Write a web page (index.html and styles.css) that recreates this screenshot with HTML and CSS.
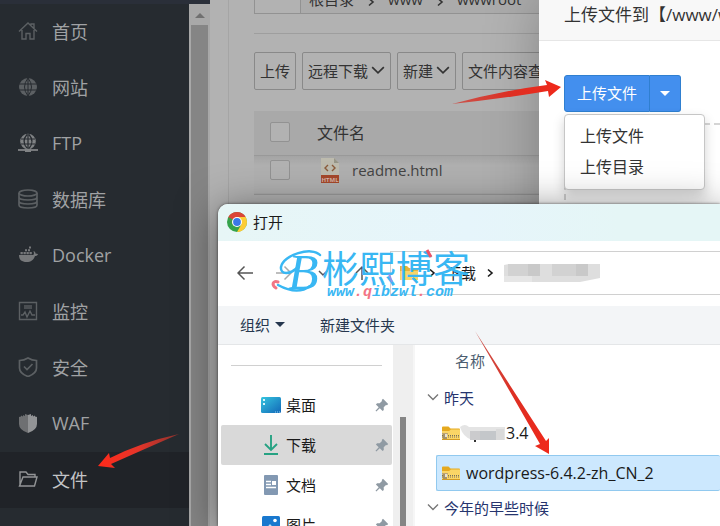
FILE: index.html
```
<!DOCTYPE html>
<html lang="zh-CN">
<head>
    <meta charset="UTF-8">
    <meta name="viewport" content="width=device-width, initial-scale=1.0">
    <title>文件</title>
    <link rel="stylesheet" href="styles.css">
</head>
<body>
    <!-- Shared icons -->
    <svg class="defs" aria-hidden="true">
        <symbol id="chevron" viewBox="0 0 12 12"><path d="M1 3.5l5 5 5-5" fill="none" stroke="currentColor" stroke-width="1.4"/></symbol>
        <symbol id="chevron-right" viewBox="0 0 12 12"><path d="M4 2.5L8 6l-4 3.5" fill="none" stroke="currentColor" stroke-width="1.6"/></symbol>
        <symbol id="pin" viewBox="0 0 14 14"><path d="M8 .8L13.2 6 12 7.2l-1-.2-2.3 2.3.1 2.6-1.2 1.2-2.8-2.8L1.300 13.500.5 12.700l3.200-3.500L.9 6.400 2.100 5.200l2.600.1L7 3l-.2-1z" fill="#8f9aa3"/></symbol>
        <symbol id="zip" viewBox="0 0 18 15">
            <path d="M0 1.500Q0 .500 1 .500h5.500l2 2H17q1 0 1 1V7H0z" fill="#e5a91f"/>
            <path d="M0 5h7l2-1.500h9V13q0 1-1 1H1q-1 0-1-1z" fill="#fbd566"/>
            <path d="M0 7h6v1.500H0z" fill="#bda475"/>
            <path d="M0 9.500h18M0 11h18" stroke="#77705d" stroke-width="1" stroke-dasharray="1 1"/>
            <path d="M1 8h4v5H1z" fill="#a7936c"/><path d="M3 8h2v3H3z" fill="#e6e2d6"/>
            <path d="M0 13.500h18" stroke="#d29a24"/>
        </symbol>
    </svg>

    <div class="panel">
        <div class="side-wrap">
            <nav class="sidebar">
                <a href="#"><svg viewBox="0 0 20 20"><path d="M1 10.500L10 2l9 8.500M4 9v9h4v-5.500h4V18h4V9M13 4V3h3v4" fill="none" stroke="currentColor" stroke-width="1.400"/></svg>首页</a>
                <a href="#"><svg viewBox="0 0 20 20"><circle cx="10" cy="10" r="9" fill="currentColor"/><path d="M1 7h18M1 13h18M10 1v18M10 1Q3 10 10 19M10 1q7 9 0 18" fill="none" stroke="#262b30" stroke-width="1"/></svg>网站</a>
                <a href="#"><svg viewBox="0 0 20 20"><circle cx="10" cy="8.500" r="7.800" fill="#808385"/><path d="M3 6h14M3 11h14M10 1v15M9 1.500Q3 8.500 9 15M11 1.500q6 7 0 14" fill="none" stroke="#262b30" stroke-width="1.200"/><path d="M0 17h20" stroke="#808385" stroke-width="1.800"/><path d="M7 16h6v3H7z" fill="#808385"/></svg>FTP</a>
                <a href="#"><svg viewBox="0 0 20 20"><path d="M1 4v12c0 4 18 4 18 0V4M1 8c0 4 18 4 18 0M1 12c0 4 18 4 18 0" fill="none" stroke="currentColor" stroke-width="1.700"/><ellipse cx="10" cy="4" rx="9" ry="3" fill="none" stroke="currentColor" stroke-width="1.700"/></svg>数据库</a>
                <a href="#"><svg viewBox="0 0 20 20"><path d="M1 10h14c1 0 1.200-2 .5-4 1.500.5 2 1.500 2 2.500l2.500.5c-.5 1.500-1.500 2-3 2-1.500 4-4 6-8.500 6S1 15 1 10zM2.500 7h2.300v2.200H2.500zM5.500 7h2.300v2.200H5.500zM8.500 7h2.300v2.200H8.500zM11.500 7h2.300v2.200h-2.300zM7 4.200h2v2H7zM10 4.200h2v2h-2zM11 1.500h2v2h-2z" fill="#77797b"/></svg>Docker</a>
                <a href="#"><svg viewBox="0 0 20 20"><path d="M1.500 1.500h17v17h-17zM3 14h2l2-3 2 5 3-6 2 4h3" fill="none" stroke="currentColor" stroke-width="1.400"/><path d="M6 4h8v4H6z" fill="#4a4e52"/></svg>监控</a>
                <a href="#"><svg viewBox="0 0 20 20"><path d="M10 1q4 2.500 8.500 2.500V11q0 5.500-8.500 8.500Q1.500 16.500 1.500 11V3.500Q6 3.500 10 1zM6 9.500l3 3L14.500 7" fill="none" stroke="currentColor" stroke-width="1.700"/></svg>安全</a>
                <a href="#"><svg viewBox="0 0 20 20"><path d="M1 4l2-.5V2.500l2 1V2l2 1V1l3 1v18Q1 17 1 11z" fill="#6e7072"/><path d="M19 4l-2-.5V2.500l-2 1V2l-2 1V1l-3 1v18q9-3 9-9z" fill="#929496"/></svg>WAF</a>
                <a href="#" class="active"><svg viewBox="0 0 20 20"><path d="M2 17V3h6l2 2.500h7V8M1.500 17L5 8h14l-2.500 9z" fill="none" stroke="currentColor" stroke-width="1.400"/></svg>文件</a>
            </nav>
            <div class="scrollbar"><span class="scroll-up"></span><span class="scroll-thumb"></span></div>
        </div>

        <main class="files">
            <div class="path">
                <span class="path-back"></span>
                <span>根目录</span><svg><use href="#chevron-right"/></svg>
                <span>www</span><svg><use href="#chevron-right"/></svg>
                <span>wwwroot</span>
            </div>
            <div class="toolbar">
                <button type="button">上传</button>
                <button type="button">远程下载<svg><use href="#chevron"/></svg></button>
                <button type="button">新建<svg><use href="#chevron"/></svg></button>
                <button type="button">文件内容查找</button>
            </div>
            <table class="file-table">
                <thead>
                    <tr><th class="check"><input type="checkbox" aria-label="全选"></th><th>文件名</th></tr>
                </thead>
                <tbody>
                    <tr>
                        <td class="check"><input type="checkbox" aria-label="readme.html"></td>
                        <td>
                            <div class="file-name">
                                <svg viewBox="0 0 18 25"><path d="M0 0h13l5 5v20H0z" fill="#bdbbae"/><path d="M13 0v5h5z" fill="#979688"/><path d="M7 7l-3 3 3 3M11 7l3 3-3 3" fill="none" stroke="#8b5b39" stroke-width="1.400"/><path d="M0 17h18v8H0z" fill="#a5482a"/><text x="9" y="23.500" text-anchor="middle" class="tag">HTML</text></svg>
                                readme.html
                            </div>
                        </td>
                    </tr>
                </tbody>
            </table>
        </main>
    </div>

    <!-- Upload window -->
    <section class="upload">
        <h2>上传文件到【/www/wwwroot】</h2>
        <div class="upload-body">
            <div class="split">
                <button type="button">上传文件</button>
                <button type="button" class="caret-btn" aria-label="更多"><span class="caret"></span></button>
            </div>
            <div class="drop-zone">
                <div class="menu">
                    <a href="#">上传文件</a>
                    <a href="#">上传目录</a>
                </div>
            </div>
        </div>
    </section>

    <!-- Open file window -->
    <section class="dialog">
        <header class="title">
            <svg viewBox="0 0 20 20"><circle cx="10" cy="10" r="10" fill="#35a34b"/><path d="M10 10L1.340 5A10 10 0 0 1 18.660 5z" fill="#db4437"/><path d="M10 5h8.660A10 10 0 0 1 10 20l4.330-7.500z" fill="#fccc35"/><path d="M1.340 5l4.330 7.500L10 10V5z" fill="#db4437"/><path d="M1.340 5l4.330 7.500 2-4z" fill="#35a34b"/><circle cx="10" cy="10" r="5" fill="#fff"/><circle cx="10" cy="10" r="3.900" fill="#3b78e7"/></svg>
            打开
        </header>
        <div class="nav">
            <button type="button" aria-label="后退"><svg viewBox="0 0 16 16"><path d="M16 8H1M7.500 1.500L1 8l6.500 6.500" /></svg></button>
            <button type="button" class="faded" aria-label="前进"><svg viewBox="0 0 16 16"><path d="M0 8h15M8.500 1.500L15 8l-6.500 6.500"/></svg></button>
            <button type="button" aria-label="最近"><svg viewBox="0 0 16 16"><path d="M4 6l4 4 4-4"/></svg></button>
            <button type="button" aria-label="上移"><svg viewBox="0 0 16 16"><path d="M8 15V2M2 8l6-6 6 6"/></svg></button>
            <div class="crumbs">
                <svg class="folder" viewBox="0 0 18 16"><path d="M0 1h7l2 2h9v12H0z" fill="#e5b33a"/><path d="M0 6h18v9H0z" fill="#f7d568"/></svg>
                <svg><use href="#chevron-right"/></svg>
                <span>下载</span>
                <svg><use href="#chevron-right"/></svg>
                <svg class="mosaic" viewBox="0 0 96 18"><path d="M0 1L5 0h91v14l-20 4H0z" fill="#dedede"/><path d="M24 0h12v12H24zM72 0h12v12H72z" fill="#c9c9c9"/><path d="M4 0h20v12H4zM48 0h24v12H48z" fill="#d2d2d2"/><path d="M0 12h28v6H0z" fill="#e6e6e6"/></svg>
            </div>
        </div>
        <div class="actions">
            <button type="button">组织<span class="caret"></span></button>
            <button type="button">新建文件夹</button>
        </div>
        <div class="browser">
            <div class="places">
                <hr>
                <a href="#">
                    <svg class="place-icon" viewBox="0 0 20 20"><defs><linearGradient id="desk" x1="0" y1="0" x2="1" y2="1"><stop offset="0" stop-color="#35c5df"/><stop offset="1" stop-color="#1268b8"/></linearGradient></defs><rect y="2" width="20" height="16" rx="1.500" fill="url(#desk)"/><path d="M2 4h2v2H2zM2 8h2v2H2z" fill="#d9f5fa"/><path d="M14 17h5" stroke="#8fd0f0" stroke-dasharray="1 1"/></svg>
                    <span>桌面</span><svg class="pin"><use href="#pin"/></svg>
                </a>
                <a href="#" class="selected">
                    <svg class="place-icon" viewBox="0 0 20 20"><path d="M10 0v15M4 9l6 6 6-6M3 19h14" fill="none" stroke="#26a283" stroke-width="1.900"/></svg>
                    <span>下载</span><svg class="pin"><use href="#pin"/></svg>
                </a>
                <a href="#">
                    <svg class="place-icon" viewBox="0 0 20 20"><rect x="3" width="14" height="20" rx="1" fill="#8298b2"/><path d="M5 6.500h5M5 9.500h5M5 12.500h10" stroke="#fff" stroke-width="1.300"/><path d="M11 6h4v4h-4z" fill="#fff"/></svg>
                    <span>文档</span><svg class="pin"><use href="#pin"/></svg>
                </a>
                <a href="#">
                    <svg class="place-icon" viewBox="0 0 20 20"><rect x="1" y="1" width="18" height="18" rx="1.500" fill="#1978ce"/><circle cx="14" cy="5.500" r="1.800" fill="#fff"/><path d="M1 18L9 9l9 10z" fill="#b9e3fa"/></svg>
                    <span>图片</span><svg class="pin"><use href="#pin"/></svg>
                </a>
            </div>
            <div class="places-scroll"><span></span></div>
            <div class="list">
                <div class="col-name">名称</div>
                <div class="group"><svg><use href="#chevron"/></svg>昨天</div>
                <a href="#" class="file"><svg class="zip"><use href="#zip"/></svg><svg class="blur" viewBox="0 0 46 20"><path d="M0 4q5-4 9 0h36v13H12Q3 14 0 4z" fill="#e4e4e4"/><path d="M10 8h10v9H10z" fill="#cbcbcd"/><path d="M20 8h16v9H20z" fill="#c4c7ca"/><path d="M36 6h8v11h-8z" fill="#dadada"/><path d="M14 17h2v2h-2z" fill="#333"/></svg>3.4</a>
                <a href="#" class="file selected"><svg class="zip"><use href="#zip"/></svg>wordpress-6.4.2-zh_CN_2</a>
                <div class="group"><svg><use href="#chevron"/></svg>今年的早些时候</div>
            </div>
        </div>
    </section>

    <!-- Watermark and arrows lie over everything -->
    <svg class="overlay" viewBox="0 0 720 526" aria-hidden="true">
        <defs>
            <linearGradient id="fade1" x1="1" y1="0" x2="0" y2="0"><stop offset="0" stop-color="#8b322d"/><stop offset=".5" stop-color="#e4352a"/><stop offset="1" stop-color="#ff2a1a"/></linearGradient>
            <linearGradient id="fade2"><stop offset="0" stop-color="#c95750"/><stop offset=".5" stop-color="#dc3024"/><stop offset="1" stop-color="#f0281a"/></linearGradient>
        </defs>
        <g class="mark">
            <text x="288" y="289" class="mark-b">B</text>
            <path d="M320 255c-8-9-37 0-39 12-1 8 9 8 17 0M310 286c-9 7-21 5-32-1" fill="none" stroke="#39b7f3" stroke-width="2.500" stroke-linecap="round"/>
            <path d="M276 288c-5-3-3-8 2-6" fill="none" stroke="#f27585" stroke-width="3" stroke-linecap="round"/>
            <text x="322" y="283" class="mark-name">彬熙博客</text>
            <path d="M427 250l4 7" stroke="#ed5266" stroke-width="3"/>
            <path d="M389 274l3 8" stroke="#8f93ec" stroke-width="2"/>
            <text x="327" y="296" class="mark-url">www<tspan class="pink">.q</tspan>ibzwl<tspan class="pink">.</tspan>com</text>
        </g>
        <path d="M179 434Q142 442 110 458L109 453 98 466 115 468 111 464Q147 448 179 434z" fill="url(#fade1)"/>
        <path d="M452 104Q500 91 547 85L545 80 561 87 549 97 548 91Q500 99 452 104z" fill="url(#fade2)"/>
        <path d="M475 331L546 441 549 438V454L535 446 540 444z" fill="url(#fade2)"/>
    </svg>
</body>
</html>
```
FILE: styles.css
```
/* General Styles */
* {
    box-sizing: border-box;
}

body {
    margin: 0;
    height: 100vh;
    overflow: hidden;
    position: relative;
    font-family: "Open Sans", "Noto Sans CJK SC", sans-serif;
    font-size: 15px;
    background: #b2b2b2;
    color: #333;
}

a {
    color: inherit;
    text-decoration: none;
}

button {
    font: inherit;
    color: inherit;
    background: none;
    border: 0;
    padding: 0;
    display: flex;
    align-items: center;
}

svg {
    flex: none;
    width: 12px;
    height: 12px;
}

.defs {
    display: none;
}

.caret {
    border: 5px solid transparent;
    border-top-color: currentColor;
    border-bottom: 0;
}

/* Sidebar */
.panel {
    display: flex;
    height: 100%;
}

.side-wrap {
    display: flex;
    width: 210px;
    flex: none;
    border-top: 4px solid #2a2f39;
    background: #a8a8a8;
}

.sidebar {
    width: 189px;
    background: #262b30;
    overflow: hidden;
}

.sidebar a {
    display: flex;
    align-items: center;
    gap: 14px;
    height: 56px;
    padding: 0 0 2px 18px;
    font-size: 18px;
    color: #a0a2a4;
}

.sidebar svg {
    width: 20px;
    height: 20px;
    color: #5c6063;
}

.sidebar .active {
    background: #202328;
    color: #c3c4c6;
}

.sidebar .active svg {
    color: #929496;
}

.scrollbar {
    display: flex;
    flex-direction: column;
    width: 19px;
    padding: 9px 0 0 2px;
}

.scroll-up {
    align-self: center;
    border: 5px solid transparent;
    border-bottom-color: #707070;
    border-top: 0;
    margin-bottom: 7px;
}

.scroll-thumb {
    flex: 1;
    background: #858585;
}

/* File manager */
.files {
    flex: 1;
    min-width: 0;
    margin-left: 18px;
    padding-left: 25px;
    border-left: 1px solid #a5a5a5;
    overflow: hidden;
}

.path {
    display: flex;
    align-items: flex-end;
    gap: 11px;
    height: 14px;
    padding-bottom: 2px;
    border: 1px solid #929292;
    border-top: 0;
    background: #ababab;
    line-height: 24px;
}

.path svg {
    margin-bottom: 3px;
}

.path-back {
    width: 46px;
    height: 13px;
    margin: 0 -3px -2px 0;
    border-right: 1px solid #929292;
    background: #b2b2b2;
}

.toolbar {
    display: flex;
    gap: 6px;
    margin-top: 19px;
    padding: 18px 0 21px;
    border-top: 1px solid #9e9e9e;
    white-space: nowrap;
}

.toolbar button {
    flex: none;
    height: 38px;
    gap: 3px;
    padding: 0 5px 2px;
    border: 1px solid #898989;
    border-radius: 2px;
}

.toolbar svg {
    width: 14px;
    height: 14px;
}

.file-table {
    width: 100%;
    border-collapse: collapse;
    font-size: 16px;
}

.file-table th {
    height: 44px;
    padding: 0 0 2px;
    font-weight: normal;
    text-align: left;
    background: #a9a9a9;
    border-bottom: 1px solid #999;
}

.file-table td {
    height: 39px;
    padding: 0 0 9px;
    border-bottom: 1px solid #999;
    background: linear-gradient(#a3a3a3, #b0b0b0 10px);
}

.file-table .check {
    width: 63px;
    padding-left: 16px;
}

.file-table input {
    display: block;
    appearance: none;
    width: 20px;
    height: 20px;
    margin: 0;
    border: 1px solid #929292;
    border-radius: 2px;
    background: #b2b2b2;
}

.file-name {
    display: flex;
    align-items: center;
    gap: 13px;
    padding-left: 4px;
    font-size: 15px;
    color: #444;
}

.file-name svg {
    width: 18px;
    height: 25px;
}

.tag {
    font-size: 6px;
    font-weight: bold;
    fill: #d5b5a8;
}

/* Upload window */
.upload {
    position: absolute;
    left: 539px;
    right: 0;
    top: 0;
    bottom: 0;
    background: #fff;
    box-shadow: 0 0 50px rgba(0, 0, 0, 0.25);
}

.upload h2 {
    height: 41px;
    margin: 0;
    padding-left: 25px;
    border-bottom: 1px solid #e6e6e6;
    background: #f8f8f8;
    font-size: 17px;
    font-weight: normal;
    line-height: 30px;
    white-space: nowrap;
    overflow: hidden;
}

.upload-body {
    padding: 34px 0 0 25px;
}

.split {
    display: flex;
    color: #fff;
}

.split button {
    height: 37px;
    padding: 0 12px 2px;
    border: 1px solid #2f7fd0;
    border-radius: 3px 0 0 3px;
    background: #438fee;
}

.split .caret-btn {
    padding: 0 10px;
    border-left: 0;
    border-radius: 0 3px 3px 0;
}

.drop-zone {
    position: relative;
    height: 300px;
    margin-top: 11px;
    border: 2px dashed #d5d5d5;
    border-right: 0;
}

.menu {
    position: absolute;
    left: -2px;
    top: -11px;
    width: 141px;
    padding: 6px 15px;
    border: 1px solid #c6c6c6;
    border-radius: 4px;
    background: #fff;
    box-shadow: 0 5px 12px rgba(0, 0, 0, 0.18);
    font-size: 16px;
}

.menu a {
    display: block;
    line-height: 31px;
}

/* Open file window */
.dialog {
    position: absolute;
    left: 218px;
    right: 0;
    top: 204px;
    bottom: 0;
    display: flex;
    flex-direction: column;
    overflow: hidden;
    border-radius: 10px 0 0 0;
    background: #fff;
    color: #1a1a1a;
    box-shadow: 0 0 3px rgba(0, 0, 0, 0.6), 0 6px 40px rgba(0, 0, 0, 0.5);
}

.title {
    display: flex;
    align-items: center;
    gap: 6px;
    height: 37px;
    flex: none;
    padding: 0 0 2px 9px;
    background: linear-gradient(90deg, #e7f6f6, #e6f5fb 50%, #e5f6f6 80%);
}

.title svg {
    width: 20px;
    height: 20px;
}

.nav {
    display: flex;
    align-items: center;
    gap: 23px;
    height: 65px;
    flex: none;
    padding: 0 0 2px 19px;
}

.nav button svg {
    width: 16px;
    height: 16px;
    fill: none;
    stroke: #555;
    stroke-width: 1.5px;
}

.nav .faded {
    opacity: 0.5;
}

.crumbs {
    flex: 1;
    display: flex;
    align-items: center;
    gap: 8px;
    height: 44px;
    margin-left: -3px;
    padding-left: 9px;
    border: 1px solid #d0d0d0;
    border-right: 0;
}

.crumbs .folder {
    width: 18px;
    height: 16px;
}

.crumbs .mosaic {
    width: 96px;
    height: 18px;
}

.actions {
    display: flex;
    gap: 35px;
    height: 39px;
    flex: none;
    padding: 0 0 2px 22px;
    border-bottom: 1px solid #e4e6e8;
    background: #f3f5f7;
    color: #26374e;
}

.actions button {
    gap: 5px;
}

.browser {
    flex: 1;
    display: flex;
    min-height: 0;
}

.places {
    width: 175px;
    padding: 20px 1px 0 3px;
    overflow: hidden;
}

.places hr {
    margin: 0 10px 19px;
    border: 0;
    border-top: 1px solid #d0d0d0;
}

.places a {
    display: flex;
    align-items: center;
    gap: 5px;
    height: 40px;
    padding: 0 3px 0 40px;
    border-radius: 2px;
}

.places span {
    padding-bottom: 2px;
}

.places .selected {
    background: #d9d9d9;
}

.place-icon {
    width: 20px;
    height: 20px;
}

.places .pin {
    width: 14px;
    height: 14px;
    margin-left: auto;
}

.places-scroll {
    width: 20px;
    padding: 72px 7px 0;
    background: #efefef;
}

.places-scroll span {
    display: block;
    height: 100%;
    background: #858585;
}

.list {
    flex: 1;
    min-width: 0;
    border-left: 2px solid #f6f6f6;
    overflow: hidden;
}

.col-name {
    height: 36px;
    padding-left: 40px;
    line-height: 32px;
    color: #4c5d70;
}

.group {
    display: flex;
    align-items: center;
    gap: 5px;
    height: 34px;
    padding: 0 0 2px 12px;
    color: #26346e;
}

.group svg {
    color: #777;
}

.file {
    display: flex;
    align-items: center;
    gap: 6px;
    height: 36px;
    margin: 0 0 4px 21px;
    padding-left: 5px;
    border: 1px solid transparent;
    border-right: 0;
    font-size: 16px;
}

.file.selected {
    margin-bottom: 0;
    border-color: #91c9ef;
    border-radius: 2px;
    background: #cce8fe;
}

.file .zip {
    width: 18px;
    height: 15px;
}

.file .blur {
    width: 46px;
    height: 20px;
    margin: 0 -6px;
}

/* Watermark and arrows */
.overlay {
    position: absolute;
    left: 0;
    top: 0;
    width: 720px;
    height: 526px;
    pointer-events: none;
}

.mark {
    fill: #39b7f3;
}

.mark-b {
    font: italic 50px "Liberation Serif", serif;
}

.mark-name {
    font: 37px "Noto Sans CJK SC", sans-serif;
}

.mark-url {
    font: italic bold 15px "Liberation Mono", monospace;
}

.pink {
    fill: #f27585;
}
```
